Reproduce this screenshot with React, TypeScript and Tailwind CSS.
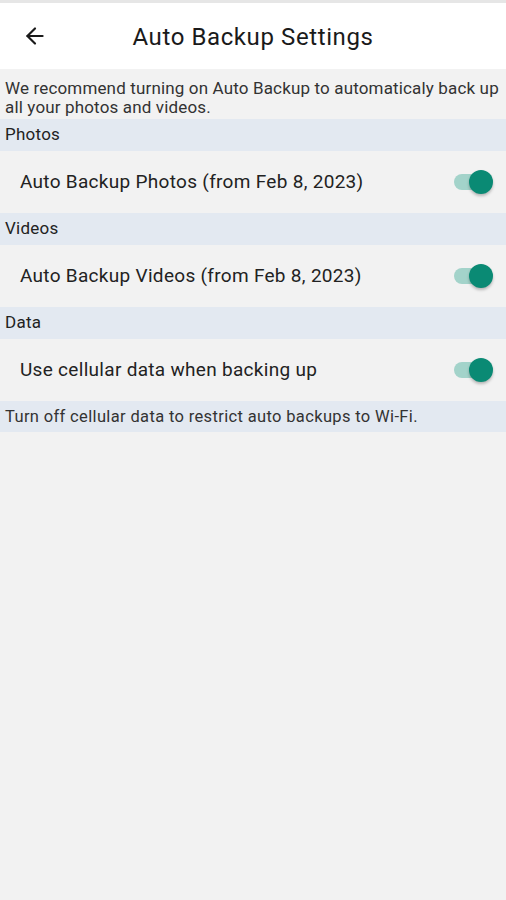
import { ArrowLeft } from 'lucide-react'

type Section = {
  title: string
  label: string
}

const sections: Section[] = [
  { title: 'Photos', label: 'Auto Backup Photos (from Feb 8, 2023)' },
  { title: 'Videos', label: 'Auto Backup Videos (from Feb 8, 2023)' },
  { title: 'Data', label: 'Use cellular data when backing up' },
]

function Toggle() {
  return (
    <div className="relative w-[40px] h-[26px] flex items-center">
      <div className="w-[36px] h-[16px] ml-[1px] rounded-full bg-[#a3d3ca]" />
      <div className="absolute right-0 top-[1px] w-[24px] h-[24px] rounded-full bg-[#0a8a74] shadow-[0_2px_3px_rgba(0,0,0,0.25)]" />
    </div>
  )
}

export default function App() {
  return (
    <div className="min-h-[900px] bg-[#f2f2f2] font-['Roboto',sans-serif] text-[#222]">
      {/* top strip */}
      <div className="h-[3px] bg-[#e6e6e6]" />

      {/* Header */}
      <div className="h-[66px] bg-white flex items-center relative">
        <div className="pl-[22px] text-[#1a1a1a]">
          <ArrowLeft size={26} strokeWidth={2} />
        </div>
        <h1 className="absolute inset-x-0 top-[16px] text-center text-[24px] tracking-[0.6px] font-normal text-[#1a1a1a] pointer-events-none">
          Auto Backup Settings
        </h1>
      </div>

      {/* Intro */}
      <p className="px-[5px] pt-[10px] pb-[2px] text-[17px] tracking-[0.15px] leading-[19px] text-[#333]">
        We recommend turning on Auto Backup to automaticaly back up all your photos and videos.
      </p>

      {sections.map((s) => (
        <div key={s.title}>
          <div className="h-[32px] bg-[#e3e9f1] px-[5px] flex items-center text-[17px] tracking-[0.25px] text-[#222]">
            {s.title}
          </div>
          <div className="h-[62px] flex items-center justify-between pl-[20px] pr-[13px]">
            <span className="text-[19px] tracking-[0.3px] text-[#222]">{s.label}</span>
            <Toggle />
          </div>
        </div>
      ))}

      <div className="h-[31px] bg-[#e3e9f1] px-[5px] pt-[2px] flex items-center text-[16.5px] tracking-[0.35px] text-[#333]">
        Turn off cellular data to restrict auto backups to Wi-Fi.
      </div>
    </div>
  )
}
